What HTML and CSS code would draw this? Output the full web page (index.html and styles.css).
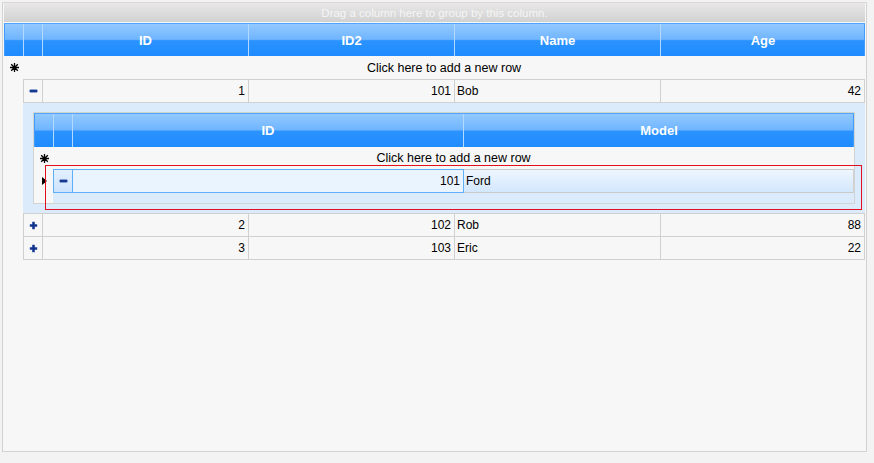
FILE: index.html
```html
<!DOCTYPE html>
<html lang="en">
<head>
    <meta charset="UTF-8">
    <title>Grid Hierarchy</title>
    <link rel="stylesheet" href="styles.css">
</head>
<body>
    <div class="grid">
        <div class="group-panel">Drag a column here to group by this column.</div>

        <div class="head main-cols">
            <div class="hcell"></div>
            <div class="hcell expand"></div>
            <div class="hcell">ID</div>
            <div class="hcell">ID2</div>
            <div class="hcell">Name</div>
            <div class="hcell last">Age</div>
        </div>

        <div class="new-row main-cols">
            <div class="indicator">
                <svg class="asterisk" width="9" height="9" viewBox="0 0 9 9"><path d="M4.5 0V9M0 4.5H9M1.2 1.2L7.8 7.8M7.8 1.2L1.2 7.8" stroke="#000" stroke-width="1.3"/></svg>
            </div>
            <div class="new-text">Click here to add a new row</div>
        </div>

        <div class="row main-cols first">
            <div class="indicator"></div>
            <div class="cell expand"><svg width="9" height="4" viewBox="0 0 9 4"><rect x="0.5" y="0.5" width="8" height="3" rx="1" fill="#2b4ea6"/><rect x="1" y="1.2" width="7" height="1.6" fill="#14358c"/></svg></div>
            <div class="cell num">1</div>
            <div class="cell num">101</div>
            <div class="cell">Bob</div>
            <div class="cell num">42</div>
        </div>

        <div class="detail">
            <div class="child-grid">
                <div class="head child-cols">
                    <div class="hcell"></div>
                    <div class="hcell expand"></div>
                    <div class="hcell">ID</div>
                    <div class="hcell last">Model</div>
                </div>
                <div class="new-row child-cols small">
                    <div class="indicator">
                        <svg class="asterisk" width="9" height="9" viewBox="0 0 9 9"><path d="M4.5 0V9M0 4.5H9M1.2 1.2L7.8 7.8M7.8 1.2L1.2 7.8" stroke="#000" stroke-width="1.3"/></svg>
                    </div>
                    <div class="new-text">Click here to add a new row</div>
                </div>
                <div class="row child-cols current">
                    <div class="indicator"><span class="arrow"></span></div>
                    <div class="cell expand"><svg width="9" height="4" viewBox="0 0 9 4"><rect x="0.5" y="0.5" width="8" height="3" rx="1" fill="#2b4ea6"/><rect x="1" y="1.2" width="7" height="1.6" fill="#14358c"/></svg></div>
                    <div class="cell num focused">101</div>
                    <div class="cell">Ford</div>
                </div>
                <div class="strip child-cols">
                    <div></div>
                    <div class="strip-fill"></div>
                </div>
            </div>
            <div class="focus-rect"></div>
        </div>

        <div class="row main-cols first">
            <div class="indicator"></div>
            <div class="cell expand"><svg width="9" height="9" viewBox="0 0 9 9"><path d="M4.5 0.8V8.2M0.8 4.5H8.2" stroke="#2a4ca4" stroke-width="2.6"/><path d="M4.5 1.2V7.8M1.2 4.5H7.8" stroke="#13338a" stroke-width="1.6"/></svg></div>
            <div class="cell num">2</div>
            <div class="cell num">102</div>
            <div class="cell">Rob</div>
            <div class="cell num">88</div>
        </div>
        <div class="row main-cols">
            <div class="indicator"></div>
            <div class="cell expand"><svg width="9" height="9" viewBox="0 0 9 9"><path d="M4.5 0.8V8.2M0.8 4.5H8.2" stroke="#2a4ca4" stroke-width="2.6"/><path d="M4.5 1.2V7.8M1.2 4.5H7.8" stroke="#13338a" stroke-width="1.6"/></svg></div>
            <div class="cell num">3</div>
            <div class="cell num">103</div>
            <div class="cell">Eric</div>
            <div class="cell num">22</div>
        </div>
    </div>
</body>
</html>
```

FILE: styles.css
```css
* {
    box-sizing: border-box;
}

body {
    margin: 0;
    background-color: #f3f3f3;
    font-family: 'Liberation Sans', Arial, sans-serif;
    font-size: 12px;
    color: #000000;
}

.grid {
    margin: 2px 0 0 2px;
    width: 865px;
    height: 450px;
    padding: 0 1px;
    border: 1px solid #d2d2d2;
    border-top-color: #ddd6d6;
    background-color: #f7f7f7;
}

.group-panel {
    height: 19px;
    margin-bottom: 1px;
    background: linear-gradient(#e8e8e8, #d1d1d1);
    color: #f5f5f5;
    font-size: 11.5px;
    display: flex;
    align-items: center;
    justify-content: center;
}

.main-cols {
    display: grid;
    grid-template-columns: 19px 20px 206px 206px 206px 204px;
}

.child-cols {
    display: grid;
    grid-template-columns: 19px 20px 391px 390px;
}

/* column headers */
.head {
    height: 33px;
    border-top: 1px solid #4ea6ff;
    background: linear-gradient(#93c9ff 0%, #6fb5ff 48%, #2b93ff 52%, #1f8bff 100%);
    box-shadow: inset 1px 0 #3f9cff, inset -1px 0 #3f9cff;
}

.child-cols.head {
    height: 34px;
}

.hcell {
    border-right: 1px solid #b4d9ff;
    color: #ffffff;
    font-weight: bold;
    font-size: 13px;
    display: flex;
    align-items: center;
    justify-content: center;
}

.hcell:first-child {
    border-right: none;
}

.hcell.expand {
    border-left: 1px solid #b4d9ff;
}

.hcell.last {
    border-right: none;
}

/* new row */
.new-row {
    height: 23px;
}

.new-row.small {
    height: 22px;
}

.new-text {
    grid-column: 2 / -1;
    font-size: 12.5px;
    display: flex;
    align-items: center;
    justify-content: center;
}

.indicator {
    display: flex;
    align-items: center;
    justify-content: center;
}

.asterisk {
    margin-left: 2px;
}

.arrow {
    width: 0;
    height: 0;
    margin-left: 2px;
    border-top: 4px solid transparent;
    border-bottom: 4px solid transparent;
    border-left: 5px solid #000000;
}

/* data rows */
.row {
    height: 23px;
}

.row.first {
    height: 24px;
}

.cell {
    border-right: 1px solid #d0d0d0;
    border-bottom: 1px solid #d0d0d0;
    padding: 0 2px;
    display: flex;
    align-items: center;
    white-space: nowrap;
}

.row.first .cell {
    border-top: 1px solid #d0d0d0;
}

.cell.expand {
    border-left: 1px solid #d0d0d0;
    justify-content: center;
    padding: 0;
}

.cell.num {
    justify-content: flex-end;
    padding-right: 3px;
}

/* detail view */
.detail {
    position: relative;
    margin-left: 19px;
    width: 842px;
    padding: 9px 10px;
    background-color: #dcebfc;
}

.child-grid {
    border: 1px solid #d3d3d3;
    background-color: #f7f7f7;
}

.row.current {
    height: 24px;
}

.row.current .cell {
    border-top: 1px solid #c9c9c9;
    border-bottom: 1px solid #c9c9c9;
    background: linear-gradient(#eef6ff, #d3e7fc);
}

.row.current .cell.expand {
    border-color: #5eaef8;
    background: linear-gradient(#e4f0fe, #cde3fb);
}

.row.current .cell.focused {
    border-color: #5eaef8;
    background: #eaf4ff;
}

.strip {
    height: 10px;
}

.strip-fill {
    grid-column: 2 / -1;
    background-color: #dcebfc;
}

.focus-rect {
    position: absolute;
    left: 22px;
    top: 62px;
    width: 817px;
    height: 45px;
    border: 1px solid #e0101c;
}
```
